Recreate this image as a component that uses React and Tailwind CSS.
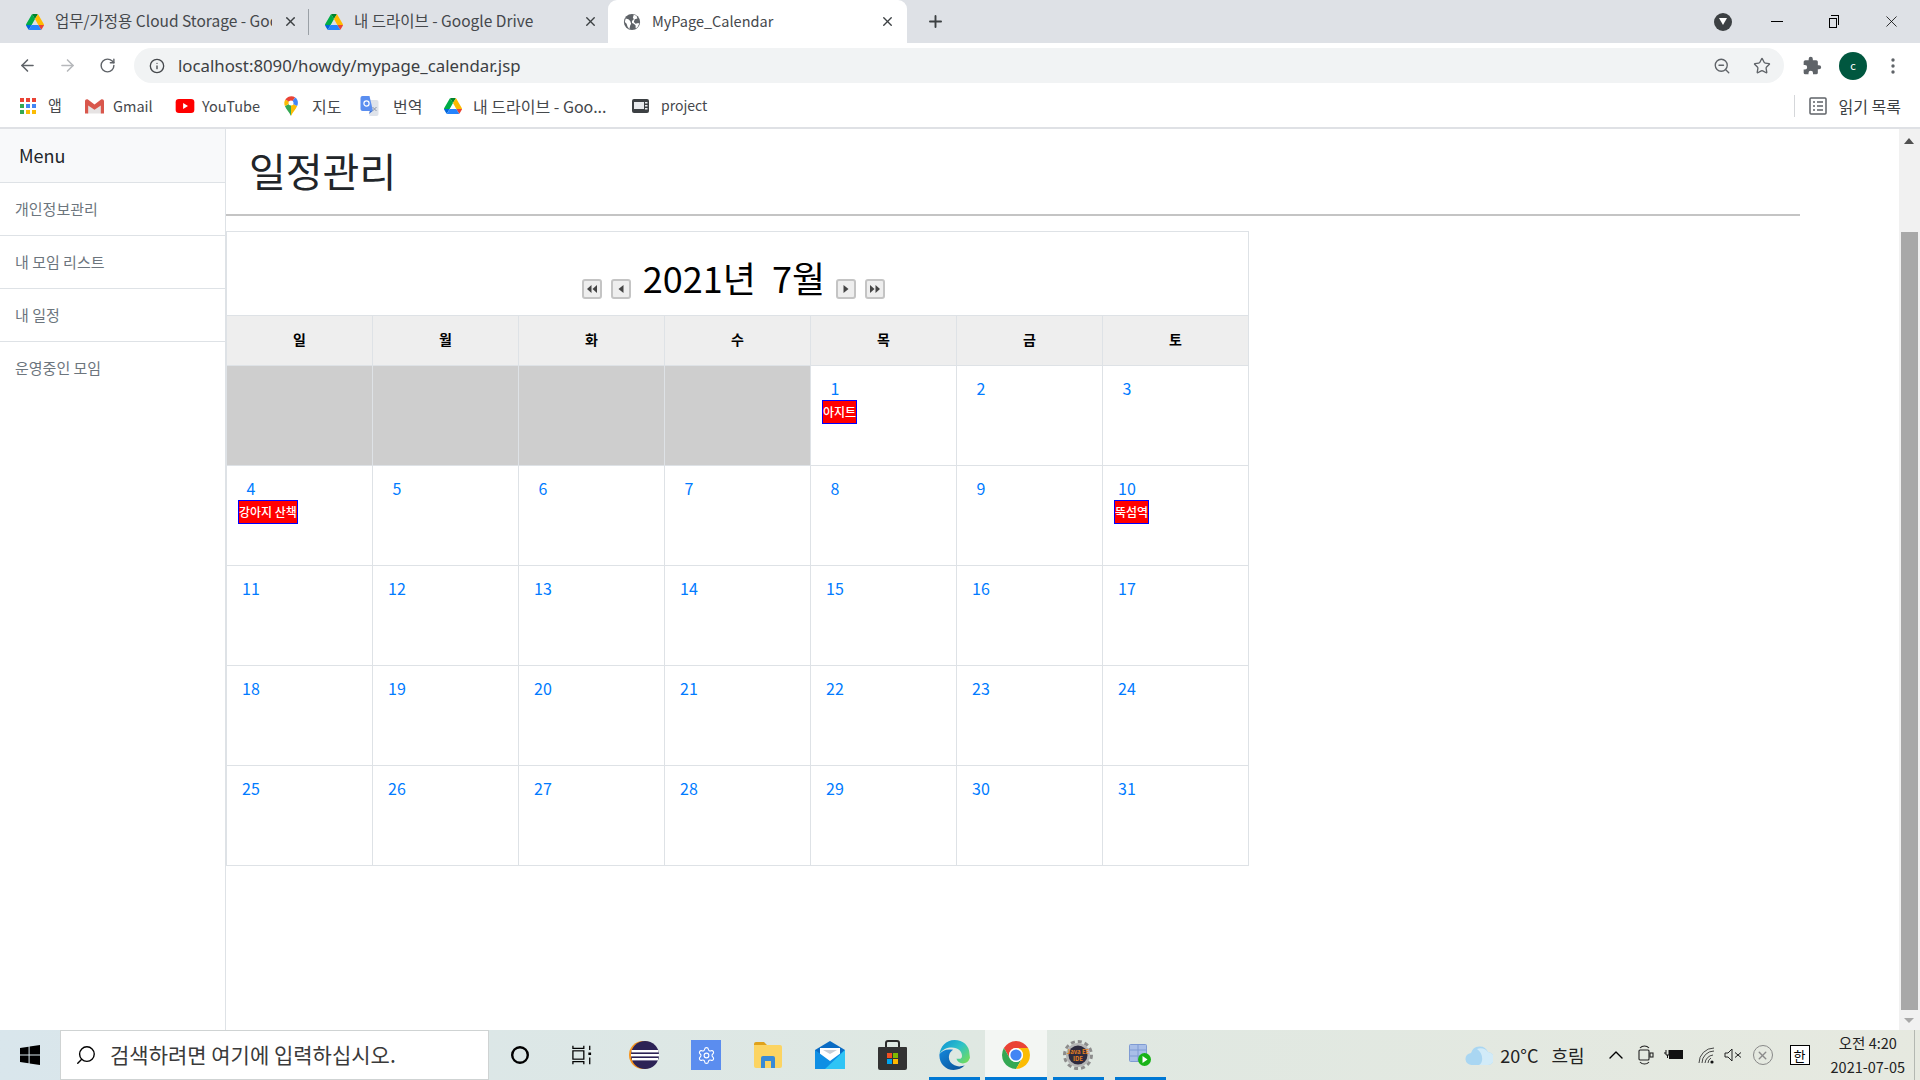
import React from "react";
import { ArrowLeft, ArrowRight, RotateCw, Info, X, Plus, Star, ZoomOut, Search, ChevronUp, Settings } from "lucide-react";

const DriveIcon = ({ s = 16 }) => (
  <svg width={s} height={s} viewBox="0 0 87.3 78" className="shrink-0">
    <path d="m6.6 66.85 3.85 6.65c.8 1.4 1.95 2.5 3.3 3.3l13.75-23.8h-27.5c0 1.55.4 3.1 1.2 4.5z" fill="#0066da" />
    <path d="m43.65 25-13.75-23.8c-1.35.8-2.5 1.9-3.3 3.3l-25.4 44a9.06 9.06 0 0 0 -1.2 4.5h27.5z" fill="#00ac47" />
    <path d="m73.55 76.8c1.35-.8 2.5-1.9 3.3-3.3l1.6-2.75 7.65-13.25c.8-1.4 1.2-2.95 1.2-4.5h-27.502l5.852 11.5z" fill="#ea4335" />
    <path d="m43.65 25 13.75-23.8c-1.35-.8-2.9-1.2-4.5-1.2h-18.5c-1.6 0-3.15.45-4.5 1.2z" fill="#00832d" />
    <path d="m59.8 53h-32.3l-13.75 23.8c1.35.8 2.9 1.2 4.5 1.2h50.8c1.6 0 3.15-.45 4.5-1.2z" fill="#2684fc" />
    <path d="m73.4 26.5-12.7-22c-.8-1.4-1.95-2.5-3.3-3.3l-13.75 23.8 16.15 28h27.45c0-1.55-.4-3.1-1.2-4.5z" fill="#ffba00" />
  </svg>
);

const GlobeIcon = () => (
  <svg width="18" height="18" viewBox="0 0 20 20" className="shrink-0">
    <circle cx="10" cy="10" r="9" fill="#5f6368" />
    <path d="M3 6l3 1 2 2 1 3-1 2-1 4-2-3-1-3-2-2zM12 2l3 1 1 3-3 1-1 3 2 2 3-1 1 1-2 4-2 1v-3l-2-2-2-1 0-2 2-2-1-2z" fill="#fff" />
  </svg>
);

const AppsIcon = () => (
  <svg width="16" height="16" viewBox="0 0 16 16" className="shrink-0">
    {[["#ea4335", "#ea4335", "#ea4335"], ["#34a853", "#4285f4", "#4285f4"], ["#34a853", "#fbbc04", "#fbbc04"]].map((r, i) =>
      r.map((c, j) => <rect key={`${i}${j}`} x={j * 6} y={i * 6} width="4" height="4" fill={c} />)
    )}
  </svg>
);

const GmailIcon = () => (
  <svg width="19" height="16" viewBox="0 0 18 14" className="shrink-0">
    <path d="M2 14V3l7 6 7-6v11z" fill="#e6e3e3" />
    <path d="M0 2.500C0 .8 1.600 0 2.800.9L9 5.600 15.200.9C16.400 0 18 .8 18 2.500V14h-3V6.500L9 10.600 3 6.500V14H0z" fill="#d9574c" />
  </svg>
);

const YoutubeIcon = () => (
  <svg width="20" height="14" viewBox="0 0 20 15" className="shrink-0">
    <rect width="20" height="15" rx="3.500" fill="#f00" />
    <path d="M8 4.200l5.200 3.300L8 10.800z" fill="#fff" />
  </svg>
);

const MapsIcon = () => (
  <svg width="14" height="20" viewBox="0 0 14 20" className="shrink-0">
    <path d="M7 20C5.800 16.600 2 13.400.9 10L7 7z" fill="#34a853" />
    <path d="M7 20c1.200-3.400 5-6.400 6.100-10L7 7z" fill="#fbbc04" />
    <path d="M.9 10C0 8 0 5.500 1.400 3.500L7 7z" fill="#fbbc04" />
    <path d="M1.400 3.500C3.600.2 8-.8 11.200 1.400L7 7z" fill="#ea4335" />
    <path d="M11.200 1.400C14 3.400 14.600 7 13.100 10L7 7z" fill="#4285f4" />
    <circle cx="7" cy="7" r="2.500" fill="#fff" />
  </svg>
);

const TranslateIcon = () => (
  <svg width="19" height="20" viewBox="0 0 18 20" className="shrink-0">
    <path d="M8 4h8a2 2 0 0 1 2 2v12a2 2 0 0 1-2 2H9z" fill="#dfe3ea" />
    <path d="M2 0h7l3.500 15H2a2 2 0 0 1-2-2V2a2 2 0 0 1 2-2z" fill="#5a8ef0" />
    <path d="M9.500 15l-1.200 3 3.900-3z" fill="#3b6fd4" />
    <circle cx="6" cy="7.500" r="2.600" fill="none" stroke="#fff" strokeWidth="1.200" />
    <path d="M12 11l4 4M16 11l-4 4" stroke="#8a94a6" strokeWidth="1" />
  </svg>
);

const ProjectIcon = () => (
  <svg width="17" height="14" viewBox="0 0 17 14" className="shrink-0">
    <rect width="17" height="14" rx="2" fill="#3c4043" />
    <rect x="2" y="3" width="10" height="7" fill="#e8eaed" />
    <rect x="13" y="3" width="2.500" height="1.500" fill="#e8eaed" />
    <rect x="13" y="6" width="2.500" height="1.500" fill="#e8eaed" />
    <rect x="13" y="9" width="2.500" height="1.500" fill="#e8eaed" />
  </svg>
);

const PuzzleIcon = () => (
  <svg width="20" height="20" viewBox="0 0 24 24" className="shrink-0">
    <path d="M20.500 11H19V7a2 2 0 0 0-2-2h-4V3.500a2.500 2.500 0 0 0-5 0V5H4a2 2 0 0 0-2 2v3.800h1.500a2.700 2.700 0 0 1 0 5.400H2V20a2 2 0 0 0 2 2h3.800v-1.500a2.700 2.700 0 0 1 5.400 0V22H17a2 2 0 0 0 2-2v-4h1.500a2.500 2.500 0 0 0 0-5z" fill="#5f6368" />
  </svg>
);

const WinLogo = () => (
  <svg width="20" height="20" viewBox="0 0 20 20">
    <path d="M0 3l8.600-1.200v7.700H0zM9.600 1.600L20 0v9.500H9.600zM0 10.500h8.600v7.700L0 17zM9.600 10.500H20V20L9.600 18.400z" fill="#000" />
  </svg>
);

const CortanaIcon = () => (
  <svg width="20" height="20" viewBox="0 0 20 20"><circle cx="10" cy="10" r="7.800" fill="none" stroke="#000" strokeWidth="2.400" /></svg>
);

const TaskViewIcon = () => (
  <svg width="20" height="20" viewBox="0 0 22 24" fill="none" stroke="#000" strokeWidth="1.400" preserveAspectRatio="none">
    <path d="M1 1v3h12V1M1 23v-3h12v3" />
    <rect x="1" y="7" width="12" height="10" />
    <rect x="18" y="9" width="3" height="3" fill="#000" stroke="none" />
    <path d="M19.500 1v5M19.500 15v8" />
  </svg>
);

const EclipseIcon = () => (
  <svg width="30" height="28" viewBox="0 0 30 28">
    <circle cx="14" cy="14" r="14" fill="#f7941e" />
    <circle cx="16" cy="14" r="14" fill="#2c2255" />
    <rect x="2.500" y="9" width="27" height="2.400" fill="#fff" />
    <rect x="2" y="13" width="28" height="2.400" fill="#fff" />
    <rect x="3" y="17" width="26" height="2.400" fill="#fff" />
  </svg>
);

const FolderIcon = () => (
  <svg width="28" height="26" viewBox="0 0 28 26">
    <path d="M0 2a2 2 0 0 1 2-2h8l3 3H4v3H0z" fill="#e0a21b" />
    <path d="M0 3h26a2 2 0 0 1 2 2v19a2 2 0 0 1-2 2H2a2 2 0 0 1-2-2z" fill="#fcd462" />
    <path d="M7 26V16a2 2 0 0 1 2-2h10a2 2 0 0 1 2 2v10h-4v-7h-6v7z" fill="#3a8ad6" />
  </svg>
);

const MailIcon = () => (
  <svg width="30" height="28" viewBox="0 0 30 28">
    <path d="M0 9L15 0l15 9v19H0z" fill="#0a6cc4" />
    <path d="M5 7h20v8l-10 6-10-6z" fill="#fff" />
    <path d="M8 9h14l-7 4z" fill="#c8ced6" />
    <path d="M0 9l15 11 15-11v19H0z" fill="#0f8fe4" />
    <path d="M30 9v19H10z" fill="#2fc4f5" />
  </svg>
);

const StoreIcon = () => (
  <svg width="29" height="30" viewBox="0 0 29 30">
    <path d="M8 8V3a2 2 0 0 1 2-2h9a2 2 0 0 1 2 2v5" fill="none" stroke="#2b2b2b" strokeWidth="2" />
    <path d="M1 7h27a1 1 0 0 1 1 1v20a2 2 0 0 1-2 2H2a2 2 0 0 1-2-2V8a1 1 0 0 1 1-1z" fill="#333" />
    <rect x="9" y="13" width="5" height="5" fill="#f25022" />
    <rect x="15" y="13" width="5" height="5" fill="#7fba00" />
    <rect x="9" y="19" width="5" height="5" fill="#00a4ef" />
    <rect x="15" y="19" width="5" height="5" fill="#ffb900" />
  </svg>
);

const EdgeIcon = () => (
  <svg width="31" height="30" viewBox="0 0 32 32">
    <defs>
      <linearGradient id="edgeTop" x1="0" y1="0" x2="1" y2="0.8"><stop offset="0" stopColor="#0c8fd6" /><stop offset="0.55" stopColor="#2fc2c8" /><stop offset="1" stopColor="#6fdb5f" /></linearGradient>
      <linearGradient id="edgeLow" x1="0" y1="0" x2="1" y2="1"><stop offset="0" stopColor="#1488dc" /><stop offset="1" stopColor="#0a4f94" /></linearGradient>
    </defs>
    <path d="M16 0C7 0 1 7 0 15c3-5 8-7 13-7 7 0 11 4 11 9 0 2-1 3-3 3h-3c1 3 4 5 7 5 3 0 6-2 7-5 1-1 0-3 0-5C32 6 25 0 16 0z" fill="url(#edgeTop)" />
    <path d="M0 15c-1 9 6 17 15 17 5 0 9-2 12-5-3 1-7 2-11 0-5-2-7-7-5.500-11.500.5-2 2-3.500 4-5C8 9 3 11 0 15z" fill="url(#edgeLow)" />
  </svg>
);

const ChromeIcon = () => (
  <svg width="28" height="28" viewBox="4 4 40 40">
    <path d="M6.680 14A20 20 0 0 1 41.320 14H24A10 10 0 0 0 15.340 29z" fill="#ea4335" />
    <path d="M6.680 14A20 20 0 0 0 24 44L32.660 29A10 10 0 0 1 15.340 29z" fill="#34a853" />
    <path d="M41.320 14A20 20 0 0 1 24 44L32.660 29A10 10 0 0 0 24 14z" fill="#fbbc04" />
    <circle cx="24" cy="24" r="10" fill="#fff" />
    <circle cx="24" cy="24" r="8" fill="#4285f4" />
  </svg>
);

const JavaIcon = () => (
  <div className="relative flex h-[30px] w-[30px] items-center justify-center">
    <svg width="30" height="30" viewBox="0 0 30 30" className="absolute inset-0">
      <circle cx="15" cy="15" r="13.500" fill="none" stroke="#8d8d8d" strokeWidth="3" strokeDasharray="4 3" />
      <circle cx="15" cy="15" r="12" fill="#b5b5b5" />
      <circle cx="15" cy="15" r="9.500" fill="#2e2b3f" />
    </svg>
    <span className="relative text-center text-[6px] font-bold leading-[7px] text-[#e8821e]">Java EE<br />IDE</span>
  </div>
);

const DbRunIcon = () => (
  <svg width="22" height="22" viewBox="0 0 22 22">
    <rect x="0.500" y="0.500" width="17" height="17" rx="1" fill="#a9bfe8" stroke="#7f9bd3" />
    <path d="M0 6h17M0 12h17M9 0v18" stroke="#7f9bd3" />
    <circle cx="15.500" cy="15.500" r="6.500" fill="#18b318" />
    <path d="M13.500 12l5 3.500-5 3.500z" fill="#fff" />
  </svg>
);

const Tab = ({ icon, children, width, labelW, pl, active, divider, closeMl, size }) => (
  <div className={`flex h-full items-center ${width} ${pl} ${active ? "rounded-t-[9px] bg-white" : ""}`}>
    {icon}
    <span className={`mb-[2px] ml-[11px] overflow-hidden whitespace-nowrap text-[#45484c] ${labelW} ${size}`}>{children}</span>
    <X size={15} strokeWidth={2.200} className={`shrink-0 text-[#3c4043] ${closeMl}`} />
    {divider && <div className="ml-[10px] h-[26px] w-px shrink-0 bg-[#9aa0a6]" />}
  </div>
);

const Bookmark = ({ w, icon, children, gap, size }) => (
  <div className={`flex h-full shrink-0 items-center ${w}`}>
    {icon}
    <span className={`whitespace-nowrap text-[#45484c] ${gap} ${size}`}>{children}</span>
  </div>
);

const weeks = [
  [null, null, null, null, 1, 2, 3],
  [4, 5, 6, 7, 8, 9, 10],
  [11, 12, 13, 14, 15, 16, 17],
  [18, 19, 20, 21, 22, 23, 24],
  [25, 26, 27, 28, 29, 30, 31],
];
const events = { 1: "아지트", 4: "강아지 산책", 10: "뚝섬역" };
const days = ["일", "월", "화", "수", "목", "금", "토"];

const NavButton = ({ dir, double }) => (
  <div className="flex h-[20px] w-[20px] items-center justify-center rounded-[3px] border-2 border-[#c4c4c4] bg-[#eeeeee]">
    <svg width="12" height="10" viewBox="0 0 12 10" fill="#444">
      {dir === "l"
        ? double
          ? <path d="M5.500 1v8L1 5zM11 1v8L6.500 5z" />
          : <path d="M8.500 1v8L3.500 5z" />
        : double
          ? <path d="M1 1v8l4.500-4zM6.500 1v8L11 5z" />
          : <path d="M3.500 1v8l5-4z" />}
    </svg>
  </div>
);

const TaskCell = ({ children, bar, barFull, active }) => (
  <div className={`flex h-full w-[62px] shrink-0 flex-col items-center ${active ? "bg-[#f3f6f3]" : ""}`}>
    <div className="flex flex-1 items-center justify-center pt-[3px]">{children}</div>
    <div className={`h-[3px] ${barFull ? "w-full" : "w-[51px]"} ${bar ? "bg-[#0078d4]" : ""}`} />
  </div>
);

export default function App() {
  return (
    <div className="flex h-screen w-[1920px] flex-col overflow-hidden bg-white font-['Noto_Sans_CJK_KR','Noto_Sans',sans-serif]">
      {/* Tab strip */}
      <div className="flex h-[43px] shrink-0 items-center bg-[#dee1e6]">
        <Tab width="w-[310px]" pl="pl-[26px]" labelW="w-[217px]" closeMl="ml-[11px]" size="text-[15.500px]" divider icon={<DriveIcon s={18} />}>업무/가정용 Cloud Storage - Google</Tab>
        <Tab width="w-[298px]" pl="pl-[15px]" labelW="w-[225px]" closeMl="ml-[4px]" size="text-[15.500px]" icon={<DriveIcon s={18} />}>내 드라이브 - Google Drive</Tab>
        <Tab width="w-[299px]" pl="pl-[15px]" labelW="w-[225px]" closeMl="ml-[3px]" size="text-[14.500px]" active icon={<GlobeIcon />}>MyPage_Calendar</Tab>
        <Plus size={19} strokeWidth={2.400} className="ml-[19px] text-[#3c4043]" />
        <div className="flex-1" />
        <div className="flex h-[18px] w-[18px] items-center justify-center rounded-full bg-[#3c4043]">
          <svg width="8" height="7" viewBox="0 0 8 7"><path d="M0 0h8L4 7z" fill="#fff" /></svg>
        </div>
        <div className="ml-[39px] flex w-[12px] justify-center"><div className="h-px w-[12px] bg-black" /></div>
        <div className="relative ml-[46px] h-[14px] w-[11px]">
          <div className="absolute left-[0px] top-[3px] h-[10px] w-[8px] border border-black bg-[#dee1e6]" />
          <div className="absolute left-[2px] top-[0px] h-[10px] w-[8px] border-r border-t border-black" />
        </div>
        <X size={19} strokeWidth={1} className="ml-[42px] mr-[19px] text-black" />
      </div>

      {/* Toolbar */}
      <div className="flex h-[41px] shrink-0 items-center bg-white pt-[4px]">
        <ArrowLeft size={19} strokeWidth={2} className="ml-[18px] text-[#5f6368]" />
        <ArrowRight size={19} strokeWidth={2} className="ml-[21px] text-[#b6b8bb]" />
        <RotateCw size={17} strokeWidth={2} className="ml-[22px] text-[#5f6368]" />
        <div className="ml-[18px] flex h-[35px] w-[1650px] items-center rounded-full bg-[#f1f3f4]">
          <Info size={16} strokeWidth={2} className="ml-[15px] text-[#45484c]" />
          <span className="ml-[13px] text-[16.800px] text-[#3c4043] font-['Noto_Sans','Noto_Sans_CJK_KR',sans-serif]">localhost:8090/howdy/mypage_calendar.jsp</span>
          <div className="flex-1" />
          <ZoomOut size={18} strokeWidth={1.800} className="text-[#5f6368]" />
          <Star size={18} strokeWidth={1.800} className="ml-[22px] mr-[13px] text-[#5f6368]" />
        </div>
        <div className="ml-[18px]"><PuzzleIcon /></div>
        <div className="ml-[17px] flex h-[28px] w-[28px] items-center justify-center rounded-full bg-[#00573f] text-[11px] text-white">c</div>
        <svg width="4" height="16" viewBox="0 0 4 16" className="ml-[24px]" fill="#5f6368">
          <circle cx="2" cy="2" r="1.700" /><circle cx="2" cy="8" r="1.700" /><circle cx="2" cy="14" r="1.700" />
        </svg>
      </div>

      {/* Bookmarks */}
      <div className="flex h-[45px] shrink-0 items-center border-b-2 border-[#dfe1e5] bg-white pl-[20px]">
        <Bookmark w="w-[65px]" gap="ml-[12px]" size="text-[15px]" icon={<AppsIcon />}>앱</Bookmark>
        <Bookmark w="w-[90px]" gap="ml-[9px]" size="text-[14.500px]" icon={<GmailIcon />}>Gmail</Bookmark>
        <Bookmark w="w-[109px]" gap="ml-[7px]" size="text-[14.500px]" icon={<YoutubeIcon />}>YouTube</Bookmark>
        <Bookmark w="w-[76px]" gap="ml-[14px]" size="text-[16px]" icon={<MapsIcon />}>지도</Bookmark>
        <Bookmark w="w-[84px]" gap="ml-[14px]" size="text-[16px]" icon={<TranslateIcon />}>번역</Bookmark>
        <Bookmark w="w-[188px]" gap="ml-[11px]" size="text-[16px]" icon={<DriveIcon s={18} />}>내 드라이브 - Goo...</Bookmark>
        <Bookmark w="w-[100px]" gap="ml-[12px]" size="text-[14px]" icon={<ProjectIcon />}>project</Bookmark>
        <div className="flex-1" />
        <div className="h-[22px] w-px bg-[#d5d7da]" />
        <svg width="18" height="18" viewBox="0 0 18 18" className="ml-[14px]" fill="none" stroke="#5f6368" strokeWidth="1.500">
          <rect x="1" y="1" width="16" height="16" rx="1" />
          <path d="M4 5h2M8 5h6M4 9h2M8 9h6M4 13h2M8 13h6" />
        </svg>
        <span className="ml-[12px] mr-[19px] whitespace-nowrap text-[16px] text-[#3c4043]">읽기 목록</span>
      </div>

      {/* Page */}
      <div className="flex min-h-0 flex-1">
        <aside className="flex w-[226px] shrink-0 flex-col border-r border-[#dee2e6] bg-white">
          <div className="flex h-[54px] items-center border-b border-[#dee2e6] bg-[#f8f9fa] pl-[19px] text-[18px] text-[#212529]">Menu</div>
          {["개인정보관리", "내 모임 리스트", "내 일정", "운영중인 모임"].map((m, i) => (
            <div key={m} className={`flex h-[53px] items-center pl-[15px] text-[15px] text-[#6c757d] ${i < 3 ? "border-b border-[#dee2e6]" : ""}`}>{m}</div>
          ))}
        </aside>

        <main className="min-w-0 flex-1">
          <div className="mr-[99px]">
            <div className="flex h-[85px] items-center pb-[4px] pl-[23px]">
              <h1 className="text-[40px] font-normal leading-none text-[#212529]">일정관리</h1>
            </div>
            <div className="h-[2px] bg-[#c4c4c4]" />
          </div>
          <table className="mt-[15px] w-[1023px] table-fixed border-collapse">
            <thead>
              <tr>
                <th colSpan={7} className="h-[84px] border border-b-0 border-[#dee2e6] p-0 font-normal">
                  <div className="flex h-full items-end justify-center pb-[16px] pr-[8px]">
                    <NavButton dir="l" double />
                    <div className="ml-[9px]"><NavButton dir="l" /></div>
                    <span className="mb-[-2px] ml-[12px] mr-[11px] whitespace-pre text-[36px] leading-[48px] text-black">2021년  7월</span>
                    <NavButton dir="r" />
                    <div className="ml-[9px]"><NavButton dir="r" double /></div>
                  </div>
                </th>
              </tr>
              <tr>
                {days.map((d) => (
                  <th key={d} className="h-[50px] border border-[#dee2e6] bg-[#eeeeee] p-0 pb-[2px] text-[14px] font-bold text-black">{d}</th>
                ))}
              </tr>
            </thead>
            <tbody>
              {weeks.map((w, i) => (
                <tr key={i}>
                  {w.map((d, j) => (
                    <td key={j} className={`h-[100px] border border-[#dee2e6] p-0 align-top ${d ? "" : "bg-[#cecece]"}`}>
                      {d && (
                        <div className="pl-[11px] pt-[10px]">
                          <div className="h-[24px] w-[26px] text-center text-[16px] leading-[24px] text-[#007bff]">{d}</div>
                          {events[d] && (
                            <div className="h-[24px] w-fit whitespace-nowrap border border-[#0000ff] bg-[#ff0000] text-[12px] font-medium leading-[21px] text-white">{events[d]}</div>
                          )}
                        </div>
                      )}
                    </td>
                  ))}
                </tr>
              ))}
            </tbody>
          </table>
        </main>

        {/* Scrollbar */}
        <div className="flex w-[21px] shrink-0 flex-col bg-[#f1f1f1]">
          <svg width="10" height="6" viewBox="0 0 10 6" className="ml-[5px] mt-[9px]"><path d="M5 0l5 6H0z" fill="#505050" /></svg>
          <div className="ml-[2px] mt-[88px] w-[17px] flex-1 bg-[#a8a8a8]" />
          <svg width="10" height="5" viewBox="0 0 10 5" className="mb-[7px] ml-[5px] mt-[8px]"><path d="M0 0h10L5 5z" fill="#a8a8a8" /></svg>
        </div>
      </div>

      {/* Taskbar */}
      <div className="flex h-[50px] shrink-0 items-stretch bg-gradient-to-r from-[#d9e6ec] via-[#dfe8e2] to-[#e6e9e0]">
        <div className="flex w-[60px] shrink-0 items-center justify-center"><WinLogo /></div>
        <div className="flex w-[429px] shrink-0 items-center border border-[#cfd3d3] bg-white">
          <Search size={22} strokeWidth={1.500} className="ml-[14px] -scale-x-100 text-black" />
          <span className="ml-[13px] text-[21px] text-[#3a3a3a]">검색하려면 여기에 입력하십시오.</span>
        </div>
        <div className="flex w-[62px] shrink-0 items-center justify-center"><CortanaIcon /></div>
        <div className="mr-[1px] flex w-[61px] shrink-0 items-center justify-center"><TaskViewIcon /></div>
        <TaskCell><EclipseIcon /></TaskCell>
        <TaskCell>
          <div className="flex h-[30px] w-[30px] items-center justify-center bg-[#5b8def]"><Settings size={19} strokeWidth={1.400} className="text-white" /></div>
        </TaskCell>
        <TaskCell><FolderIcon /></TaskCell>
        <TaskCell><MailIcon /></TaskCell>
        <TaskCell><StoreIcon /></TaskCell>
        <TaskCell bar><EdgeIcon /></TaskCell>
        <TaskCell bar barFull active><ChromeIcon /></TaskCell>
        <TaskCell bar><JavaIcon /></TaskCell>
        <TaskCell bar><DbRunIcon /></TaskCell>
        <div className="flex-1" />
        <div className="flex items-center">
          <svg width="28" height="22" viewBox="0 0 28 22">
            <path d="M7 21a6 6 0 0 1-1-12 9 9 0 0 1 17-1 6.500 6.500 0 0 1-1 13z" fill="#a9d6f2" />
            <path d="M12 5a9 9 0 0 1 11 3 6.500 6.500 0 0 1-1 13h-8c5-3 4-12-2-16z" fill="#d2ebf8" />
          </svg>
          <span className="ml-[7px] text-[18px] text-[#222]">20°C</span>
          <span className="ml-[13px] text-[18px] text-[#222]">흐림</span>
          <ChevronUp size={24} strokeWidth={1.400} className="ml-[19px] text-black" />
          <svg width="16" height="20" viewBox="0 0 16 20" className="ml-[10px]" fill="none" stroke="#222" strokeWidth="1.100">
            <path d="M2 3a6 6 0 0 1 9 0M2 17a6 6 0 0 0 9 0" /><rect x="1" y="5" width="10" height="10" rx="1" /><rect x="12" y="8" width="3" height="4" />
          </svg>
          <svg width="20" height="12" viewBox="0 0 20 12" className="ml-[10px]">
            <path d="M0 4h2M2 1v5h3V1M3.500 6v3" stroke="#111" fill="none" />
            <rect x="5" y="1" width="14" height="9" fill="#111" />
          </svg>
          <svg width="17" height="17" viewBox="0 0 17 17" className="ml-[14px]" fill="none" stroke="#333" strokeWidth="0.900">
            <path d="M1 16A15 15 0 0 1 16 1M4 16A12 12 0 0 1 16 4M7 16a9 9 0 0 1 8-8M10 16a6 6 0 0 1 3-5" />
            <circle cx="14" cy="15" r="1.600" fill="#111" stroke="none" />
          </svg>
          <svg width="18" height="14" viewBox="0 0 18 14" className="ml-[9px]" fill="none" stroke="#222" strokeWidth="1">
            <path d="M1 5h3l4-4v12l-4-4H1zM11 4.500l6 5M17 4.500l-6 5" />
          </svg>
          <div className="ml-[11px] flex h-[20px] w-[20px] items-center justify-center rounded-full border border-[#888]"><X size={13} strokeWidth={2.600} className="text-[#8a8a8a]" /></div>
          <div className="ml-[17px] flex h-[20px] w-[20px] items-center justify-center border border-black bg-white text-[13px] leading-none text-black">한</div>
          <div className="ml-[21px] mr-[9px] flex flex-col items-center text-[14.500px] leading-[24px] text-[#222]">
            <span>오전 4:20</span>
            <span>2021-07-05</span>
          </div>
          <div className="mr-[5px] h-full w-px bg-[#b4b8b2]" />
        </div>
      </div>
    </div>
  );
}
